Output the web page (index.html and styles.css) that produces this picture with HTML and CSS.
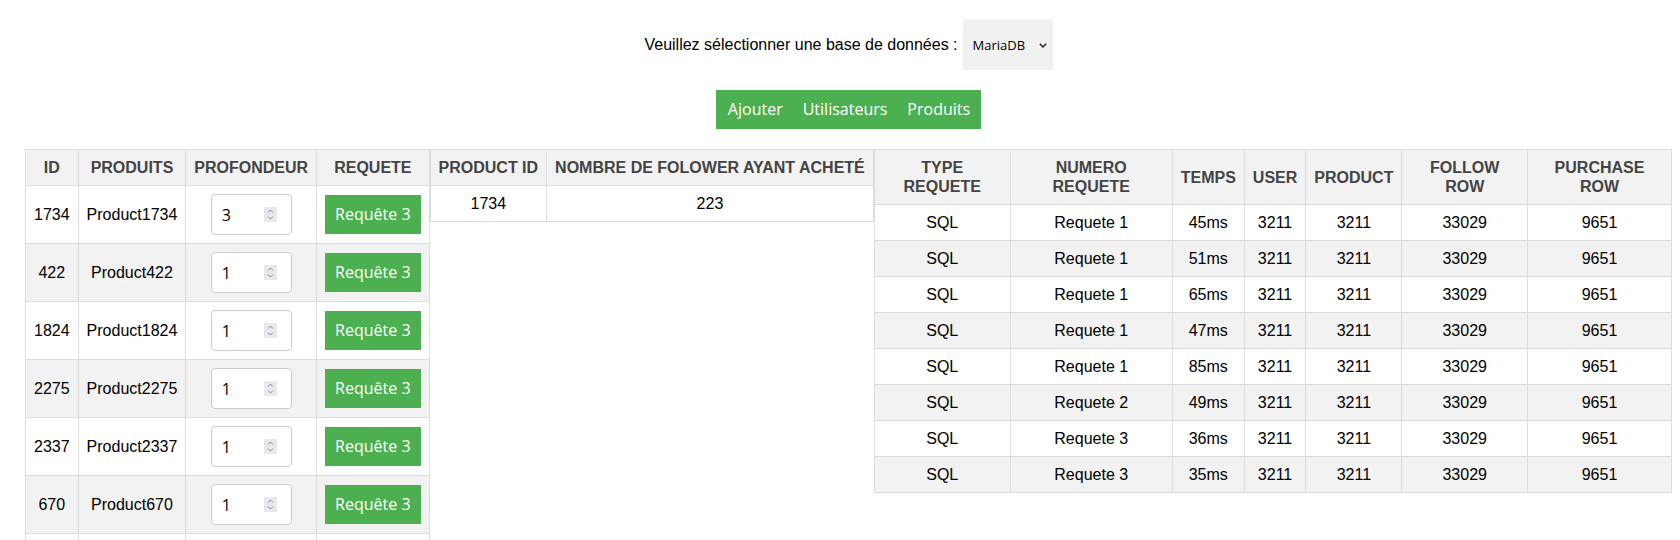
FILE: index.html
```html
<!DOCTYPE html>
<html lang="fr">
<head>
    <meta charset="UTF-8">
    <meta name="viewport" content="width=device-width, initial-scale=1.0">
    <title>Requêtes produits</title>
    <link rel="stylesheet" href="styles.css">
</head>
<body>

<!-- Choix de la base -->
<div class="db-select">
    <label for="db">Veuillez sélectionner une base de données :</label>
    <span class="select-wrap">
        <select id="db">
            <option>MariaDB</option>
            <option>Neo4j</option>
        </select>
        <svg class="select-arrow" width="8" height="5" viewBox="0 0 8 5"><polyline points="0.8,0.8 4,4 7.2,0.8" fill="none" stroke="#222" stroke-width="1.4"/></svg>
    </span>
</div>

<!-- Menu -->
<div class="menu">
    <nav class="menu-bar">
        <a href="#">Ajouter</a>
        <a href="#">Utilisateurs</a>
        <a href="#">Produits</a>
    </nav>
</div>

<div class="tables">
    <!-- Liste des produits -->
    <table class="products">
        <thead>
            <tr>
                <th>ID</th>
                <th>PRODUITS</th>
                <th>PROFONDEUR</th>
                <th>REQUETE</th>
            </tr>
        </thead>
        <tbody>
            <tr>
                <td>1734</td>
                <td>Product1734</td>
                <td><span class="depth-wrap"><input class="depth" type="number" value="3" min="1"><svg class="spin" width="13" height="15" viewBox="0 0 13 15"><rect width="13" height="15" fill="#e9e9ed"/><polyline points="4,5.5 6.5,3 9,5.5" fill="none" stroke="#8a8a93"/><polyline points="4,9.5 6.5,12 9,9.5" fill="none" stroke="#8a8a93"/></svg></span></td>
                <td><button class="btn-req">Requête 3</button></td>
            </tr>
            <tr>
                <td>422</td>
                <td>Product422</td>
                <td><span class="depth-wrap"><input class="depth" type="number" value="1" min="1"><svg class="spin" width="13" height="15" viewBox="0 0 13 15"><rect width="13" height="15" fill="#e9e9ed"/><polyline points="4,5.5 6.5,3 9,5.5" fill="none" stroke="#8a8a93"/><polyline points="4,9.5 6.5,12 9,9.5" fill="none" stroke="#8a8a93"/></svg></span></td>
                <td><button class="btn-req">Requête 3</button></td>
            </tr>
            <tr>
                <td>1824</td>
                <td>Product1824</td>
                <td><span class="depth-wrap"><input class="depth" type="number" value="1" min="1"><svg class="spin" width="13" height="15" viewBox="0 0 13 15"><rect width="13" height="15" fill="#e9e9ed"/><polyline points="4,5.5 6.5,3 9,5.5" fill="none" stroke="#8a8a93"/><polyline points="4,9.5 6.5,12 9,9.5" fill="none" stroke="#8a8a93"/></svg></span></td>
                <td><button class="btn-req">Requête 3</button></td>
            </tr>
            <tr>
                <td>2275</td>
                <td>Product2275</td>
                <td><span class="depth-wrap"><input class="depth" type="number" value="1" min="1"><svg class="spin" width="13" height="15" viewBox="0 0 13 15"><rect width="13" height="15" fill="#e9e9ed"/><polyline points="4,5.5 6.5,3 9,5.5" fill="none" stroke="#8a8a93"/><polyline points="4,9.5 6.5,12 9,9.5" fill="none" stroke="#8a8a93"/></svg></span></td>
                <td><button class="btn-req">Requête 3</button></td>
            </tr>
            <tr>
                <td>2337</td>
                <td>Product2337</td>
                <td><span class="depth-wrap"><input class="depth" type="number" value="1" min="1"><svg class="spin" width="13" height="15" viewBox="0 0 13 15"><rect width="13" height="15" fill="#e9e9ed"/><polyline points="4,5.5 6.5,3 9,5.5" fill="none" stroke="#8a8a93"/><polyline points="4,9.5 6.5,12 9,9.5" fill="none" stroke="#8a8a93"/></svg></span></td>
                <td><button class="btn-req">Requête 3</button></td>
            </tr>
            <tr>
                <td>670</td>
                <td>Product670</td>
                <td><span class="depth-wrap"><input class="depth" type="number" value="1" min="1"><svg class="spin" width="13" height="15" viewBox="0 0 13 15"><rect width="13" height="15" fill="#e9e9ed"/><polyline points="4,5.5 6.5,3 9,5.5" fill="none" stroke="#8a8a93"/><polyline points="4,9.5 6.5,12 9,9.5" fill="none" stroke="#8a8a93"/></svg></span></td>
                <td><button class="btn-req">Requête 3</button></td>
            </tr>
            <tr class="row-cut">
                <td></td>
                <td></td>
                <td></td>
                <td></td>
            </tr>
        </tbody>
    </table>

    <!-- Resultat de la requete -->
    <table class="followers">
        <thead>
            <tr>
                <th>PRODUCT ID</th>
                <th>NOMBRE DE FOLOWER AYANT ACHETÉ</th>
            </tr>
        </thead>
        <tbody>
            <tr>
                <td>1734</td>
                <td>223</td>
            </tr>
        </tbody>
    </table>

    <!-- Historique des temps -->
    <table class="stats">
        <colgroup>
            <col class="c-type">
            <col class="c-num">
            <col class="c-time">
            <col class="c-user">
            <col class="c-product">
            <col class="c-follow">
            <col class="c-purchase">
        </colgroup>
        <thead>
            <tr>
                <th>TYPE<br>REQUETE</th>
                <th>NUMERO<br>REQUETE</th>
                <th>TEMPS</th>
                <th>USER</th>
                <th>PRODUCT</th>
                <th>FOLLOW<br>ROW</th>
                <th>PURCHASE<br>ROW</th>
            </tr>
        </thead>
        <tbody>
            <tr><td>SQL</td><td>Requete 1</td><td>45ms</td><td>3211</td><td>3211</td><td>33029</td><td>9651</td></tr>
            <tr><td>SQL</td><td>Requete 1</td><td>51ms</td><td>3211</td><td>3211</td><td>33029</td><td>9651</td></tr>
            <tr><td>SQL</td><td>Requete 1</td><td>65ms</td><td>3211</td><td>3211</td><td>33029</td><td>9651</td></tr>
            <tr><td>SQL</td><td>Requete 1</td><td>47ms</td><td>3211</td><td>3211</td><td>33029</td><td>9651</td></tr>
            <tr><td>SQL</td><td>Requete 1</td><td>85ms</td><td>3211</td><td>3211</td><td>33029</td><td>9651</td></tr>
            <tr><td>SQL</td><td>Requete 2</td><td>49ms</td><td>3211</td><td>3211</td><td>33029</td><td>9651</td></tr>
            <tr><td>SQL</td><td>Requete 3</td><td>36ms</td><td>3211</td><td>3211</td><td>33029</td><td>9651</td></tr>
            <tr><td>SQL</td><td>Requete 3</td><td>35ms</td><td>3211</td><td>3211</td><td>33029</td><td>9651</td></tr>
        </tbody>
    </table>
</div>

</body>
</html>
```

FILE: styles.css
```css
* {
    box-sizing: border-box;
}

body {
    margin: 0;
    padding: 19px 8px 0 25px;
    font-family: "Liberation Sans", Arial, sans-serif;
    font-size: 16px;
    color: #000;
    background: #fff;
}

/* Choix de la base */
.db-select {
    display: flex;
    justify-content: center;
    align-items: center;
    gap: 5px;
}

.select-wrap {
    position: relative;
    display: inline-block;
}

.select-wrap select {
    display: block;
    width: 90px;
    height: 51px;
    padding: 0 20px 0 10px;
    border: none;
    background-color: #f1f1f1;
    font-family: "Open Sans", sans-serif;
    font-size: 13px;
    color: #000;
    -webkit-appearance: none;
    appearance: none;
}

.select-arrow {
    position: absolute;
    right: 6px;
    top: 24px;
    pointer-events: none;
}

/* Menu */
.menu {
    display: flex;
    justify-content: center;
    margin-top: 20px;
}

.menu-bar {
    display: flex;
    padding: 0 1px 0 2px;
    background-color: #4caf50;
}

.menu-bar a {
    padding: 9px 10px;
    font-family: "Open Sans", sans-serif;
    font-size: 16px;
    line-height: 21px;
    color: #fff;
    text-decoration: none;
}

/* Tables */
.tables {
    display: flex;
    align-items: flex-start;
    margin-top: 20px;
}

table {
    border-collapse: collapse;
}

th, td {
    border: 1px solid #ddd;
    padding: 8px;
    text-align: center;
    font-size: 16px;
    line-height: 19px;
}

th {
    background-color: #f2f2f2;
    color: #444;
    font-weight: bold;
}

tbody tr:nth-child(even) {
    background-color: #f2f2f2;
}

.products td {
    height: 58px;
}

.depth-wrap {
    position: relative;
    display: inline-block;
    vertical-align: middle;
}

.depth {
    display: block;
    width: 81px;
    height: 41px;
    padding: 0 24px 0 10px;
    border: 1px solid #ccc;
    border-radius: 4px;
    font-family: "Open Sans", sans-serif;
    font-size: 16px;
    color: #000;
    background: #fff;
    -moz-appearance: textfield;
}

.depth::-webkit-inner-spin-button,
.depth::-webkit-outer-spin-button {
    -webkit-appearance: none;
    margin: 0;
}

.spin {
    position: absolute;
    right: 15px;
    top: 13px;
    pointer-events: none;
}

.btn-req {
    padding: 8px 10px;
    border: none;
    background-color: #4caf50;
    color: #fff;
    font-family: "Open Sans", sans-serif;
    font-size: 16px;
    line-height: 23px;
    vertical-align: middle;
    cursor: pointer;
}

.stats {
    flex: 1;
    table-layout: fixed;
}

.c-type { width: 17.1%; }
.c-num { width: 20.4%; }
.c-time { width: 9%; }
.c-user { width: 7.6%; }
.c-product { width: 12%; }
.c-follow { width: 15.8%; }
.c-purchase { width: 18.1%; }
```
